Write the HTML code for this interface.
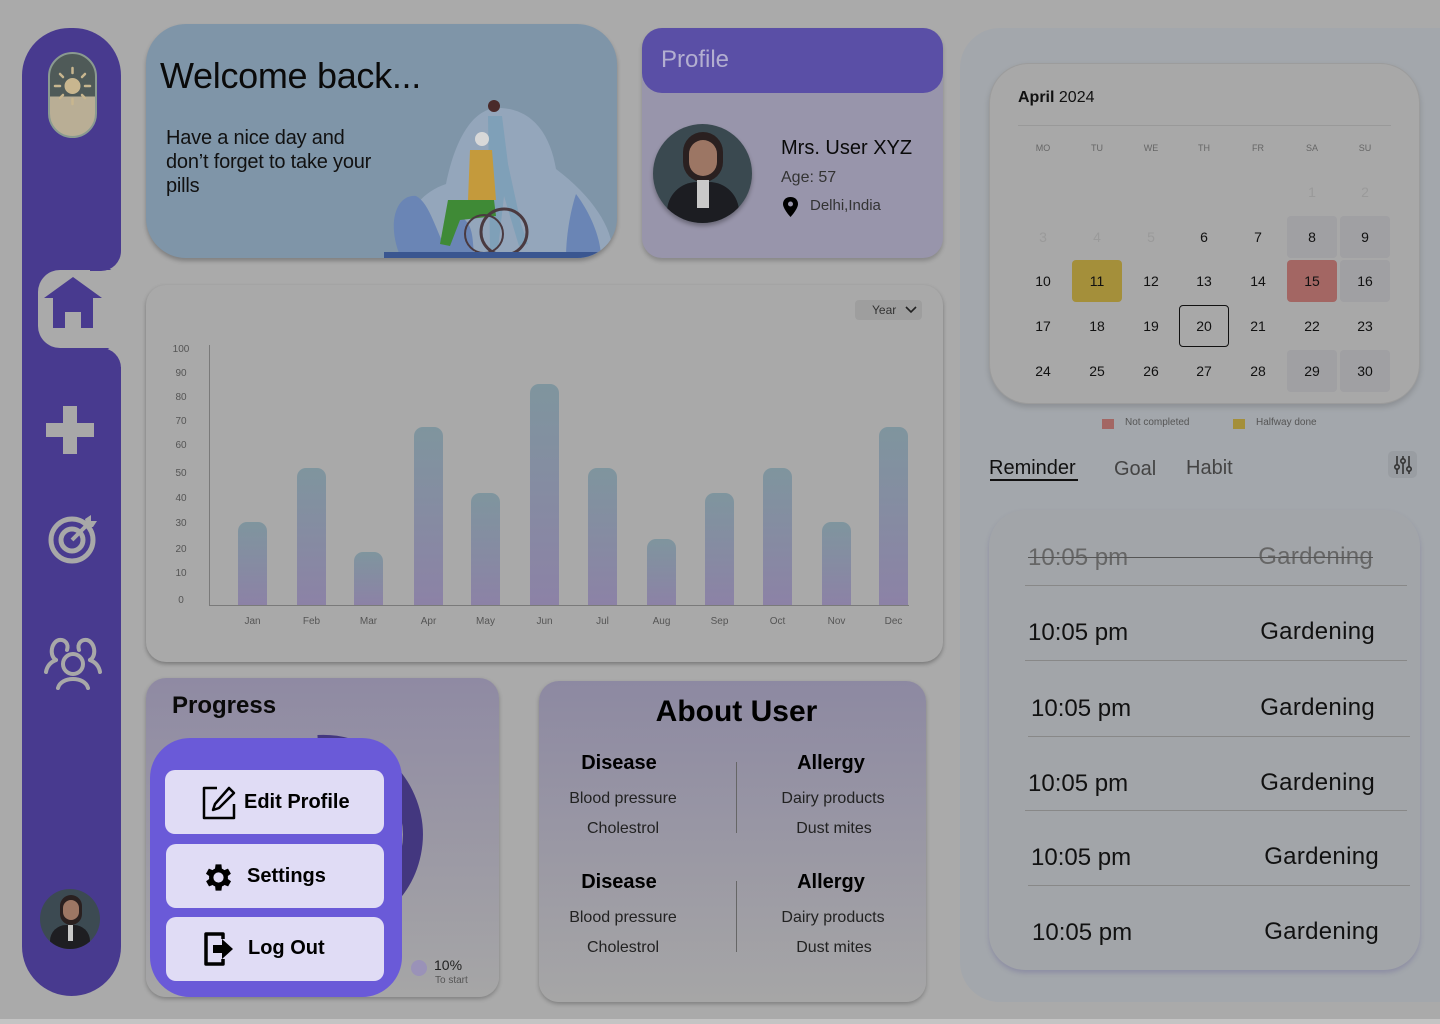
<!DOCTYPE html>
<html><head><meta charset="utf-8"><style>
*{margin:0;padding:0;box-sizing:border-box}
body{width:1440px;height:1024px;background:#aaaaaa;font-family:"Liberation Sans",sans-serif;position:relative;overflow:hidden;color:#111}
.a{position:absolute}
.t{position:absolute;white-space:nowrap;line-height:1}
</style></head><body>
<div class="a" style="left:0;top:1019px;width:1440px;height:5px;background:#c4c4c4"></div>
<!-- right panel -->
<div class="a" style="left:960px;top:28px;width:480px;height:974px;background:#a3a7ac;border-radius:40px 0 0 40px"></div>

<!-- sidebar -->
<div class="a" style="left:22px;top:28px;width:99px;height:968px;background:#483a8f;border-radius:48px 48px 50px 50px"></div>
<div class="a" style="left:38px;top:270px;width:90px;height:78px;background:#aaaaaa;border-radius:22px 0 0 22px"></div>
<div class="a" style="left:100px;top:250px;width:30px;height:22px;background:#aaaaaa;border-radius:0 0 0 20px"></div>
<div class="a" style="left:100px;top:345px;width:30px;height:22px;background:#aaaaaa;border-radius:20px 0 0 0"></div>
<div class="a" style="left:90px;top:245px;width:31px;height:26px;background:#483a8f;border-radius:0 0 20px 0"></div>
<div class="a" style="left:90px;top:348px;width:31px;height:26px;background:#483a8f;border-radius:0 20px 0 0"></div>
<!-- logo pill -->
<div class="a" style="left:48px;top:52px;width:49px;height:86px;border-radius:25px;background:linear-gradient(#4f5a58 0 52%,#b9ae95 52%);border:2px solid #8a9a90"></div>
<svg class="a" style="left:50px;top:64px" width="45" height="45" viewBox="0 0 45 45"><circle cx="22.5" cy="22" r="8" fill="#c8b68f"/><g stroke="#c8b68f" stroke-width="2.5" stroke-linecap="round"><line x1="22.5" y1="4" x2="22.5" y2="9"/><line x1="22.5" y1="35" x2="22.5" y2="40"/><line x1="5" y1="22" x2="10" y2="22"/><line x1="35" y1="22" x2="40" y2="22"/><line x1="10" y1="10" x2="13" y2="13"/><line x1="32" y1="31" x2="35" y2="34"/><line x1="35" y1="10" x2="32" y2="13"/><line x1="10" y1="34" x2="13" y2="31"/></g></svg>
<!-- home -->
<svg class="a" style="left:43px;top:276px" width="60" height="54" viewBox="0 0 60 54"><path d="M30 1 L59 22 L50 22 L50 52 L38 52 L38 36 L22 36 L22 52 L10 52 L10 22 L1 22 Z" fill="#483a8f"/></svg>
<!-- plus -->
<svg class="a" style="left:46px;top:406px" width="48" height="48"><path d="M17 0h14v17h17v14H31v17H17V31H0V17h17z" fill="#a8a8a8"/></svg>
<!-- target -->
<svg class="a" style="left:47px;top:513px" width="52" height="52" viewBox="0 0 52 52"><circle cx="25" cy="27" r="21" fill="none" stroke="#a8a8a8" stroke-width="5"/><circle cx="25" cy="27" r="11" fill="none" stroke="#a8a8a8" stroke-width="5"/><line x1="25" y1="27" x2="42" y2="10" stroke="#a8a8a8" stroke-width="4"/><path d="M38 6 L44 2 L44 8 L50 8 L46 14 L40 14Z" fill="#a8a8a8"/></svg>
<!-- users -->
<svg class="a" style="left:43px;top:634px" width="60" height="56" viewBox="0 0 60 56" fill="none" stroke="#a8a8a8" stroke-width="4" stroke-linecap="round"><circle cx="30" cy="30" r="10"/><path d="M15 54 C18 42 42 42 45 54"/><path d="M13 26 C6 22 8 8 16 6 C22 5 26 10 24 16"/><path d="M47 26 C54 22 52 8 44 6 C38 5 34 10 36 16"/><path d="M13 26 C8 28 4 32 3 38"/><path d="M47 26 C52 28 56 32 57 38"/></svg>
<!-- sidebar avatar -->
<div class="a" style="left:40px;top:889px;width:60px;height:60px;border-radius:50%;background:#3c4a52;overflow:hidden">
 <div class="a" style="left:20px;top:6px;width:22px;height:30px;border-radius:11px;background:#2a2020"></div>
 <div class="a" style="left:23px;top:11px;width:16px;height:20px;border-radius:8px;background:#9c7664"></div>
 <div class="a" style="left:10px;top:36px;width:40px;height:30px;background:#1e1e22;border-radius:16px 16px 0 0"></div>
 <div class="a" style="left:28px;top:36px;width:5px;height:16px;background:#c9c9c9"></div>
</div>

<!-- welcome card -->
<div class="a" style="left:146px;top:24px;width:471px;height:234px;background:#7f95a8;border-radius:40px;box-shadow:0 3px 4px rgba(0,0,0,.25);overflow:hidden">
 <svg class="a" style="left:230px;top:60px" width="241" height="174" viewBox="0 0 241 174">
  <path d="M40 174 C20 140 40 110 70 100 C80 50 100 22 125 24 C160 26 175 55 180 85 C220 115 240 150 236 174Z" fill="#94a6bb"/>
  <path d="M25 174 C10 140 20 110 40 112 C55 120 60 150 75 174Z" fill="#6a85b5"/>
  <path d="M70 174 C60 150 70 130 88 135 C100 145 95 165 100 174Z" fill="#6a85b5"/>
  <path d="M190 174 C190 150 195 125 200 110 C215 130 225 155 225 174Z" fill="#6a85b5"/>
  <circle cx="118" cy="22" r="6" fill="#4a2a2a"/>
  <path d="M112 32 L126 32 L132 80 L145 140 L152 160 L143 162 L128 112 L122 165 L114 165Z" fill="#7fa0b8"/>
  <circle cx="106" cy="55" r="7" fill="#d8d8d8"/>
  <path d="M94 66 L116 66 L120 116 L92 116Z" fill="#c49a3c"/>
  <path d="M72 116 L118 116 L120 132 L84 136 L74 162 L64 160Z" fill="#3f8a36"/>
  <circle cx="128" cy="148" r="23" fill="none" stroke="#4a3a40" stroke-width="3"/>
  <circle cx="108" cy="150" r="19" fill="none" stroke="#4a3a40" stroke-width="2"/>
 </svg>
 <div class="a" style="left:238px;top:228px;width:233px;height:6px;background:#3a5690"></div>
</div>
<div class="t" style="left:160px;top:58px;font-size:36px;color:#0a0a0a;letter-spacing:-0.3px">Welcome back...</div>
<div class="t" style="left:166px;top:126px;font-size:20px;line-height:24px;color:#111;letter-spacing:-0.2px">Have a nice day and<br>don’t forget to take your<br>pills</div>

<!-- profile card -->
<div class="a" style="left:642px;top:28px;width:301px;height:230px;background:#9895ab;border-radius:20px;box-shadow:0 3px 4px rgba(0,0,0,.2)"></div>
<div class="a" style="left:642px;top:28px;width:301px;height:65px;background:#5a4fa6;border-radius:20px"></div>
<div class="t" style="left:661px;top:48px;font-size:24px;color:#b3afd0">Profile</div>
<div class="a" style="left:653px;top:124px;width:99px;height:99px;border-radius:50%;background:#3a4950;overflow:hidden;box-shadow:0 3px 4px rgba(0,0,0,.3)">
 <div class="a" style="left:30px;top:8px;width:40px;height:50px;border-radius:20px;background:#2a2020"></div>
 <div class="a" style="left:36px;top:16px;width:28px;height:36px;border-radius:14px;background:#9c7664"></div>
 <div class="a" style="left:14px;top:58px;width:72px;height:45px;border-radius:30px 30px 0 0;background:#1c1d22"></div>
 <div class="a" style="left:44px;top:56px;width:12px;height:28px;background:#c9c9c9"></div>
</div>
<div class="t" style="left:781px;top:138px;font-size:20px;color:#0a0a0a">Mrs. User XYZ</div>
<div class="t" style="left:781px;top:170px;font-size:16px;color:#333">Age: 57</div>
<svg class="a" style="left:782px;top:197px" width="17" height="20" viewBox="0 0 17 20"><path d="M8.5 0C4 0 1 3 1 7c0 5 7.5 13 7.5 13S16 12 16 7c0-4-3-7-7.5-7z" fill="#000"/><circle cx="8.5" cy="7" r="2.5" fill="#9895ab"/></svg>
<div class="t" style="left:810px;top:198px;font-size:15px;color:#333">Delhi,India</div>

<!-- chart card -->
<div class="a" style="left:146px;top:285px;width:797px;height:377px;background:#a9a9a9;border-radius:20px;box-shadow:0 2px 4px rgba(0,0,0,.3)"></div>
<div class="a" style="left:855px;top:300px;width:67px;height:20px;background:#9e9e9e;border-radius:4px"></div>
<div class="t" style="left:872px;top:304px;font-size:12px;color:#333">Year</div>
<svg class="a" style="left:905px;top:305px" width="12" height="10"><path d="M1 2 L6 7 L11 2" fill="none" stroke="#222" stroke-width="1.6"/></svg>
<div class="a" style="left:209px;top:345px;width:1px;height:261px;background:#7a7a7a"></div>
<div class="a" style="left:209px;top:605px;width:700px;height:1px;background:#7a7a7a"></div>
<div id="yl"></div>

<!-- progress card -->
<div class="a" style="left:146px;top:678px;width:353px;height:319px;background:linear-gradient(#8f8aa3,#a6a6a6);border-radius:20px;box-shadow:0 2px 4px rgba(0,0,0,.25)"></div>
<div class="t" style="left:172px;top:694px;font-size:24px;font-weight:bold;color:#0a0a0a">Progress</div>
<svg class="a" style="left:200px;top:720px" width="260" height="240"><path d="M118 25 A90 90 0 0 1 185 180" fill="none" stroke="#43377f" stroke-width="20"/></svg>
<div class="a" style="left:411px;top:960px;width:16px;height:16px;border-radius:50%;background:#9a92b8"></div>
<div class="t" style="left:434px;top:958px;font-size:14px;color:#222">10%</div>
<div class="t" style="left:435px;top:976px;font-size:10px;color:#555">To start</div>

<!-- popup -->
<div class="a" style="left:150px;top:738px;width:252px;height:259px;background:#6a5ad8;border-radius:40px"></div>
<div class="a" style="left:165px;top:770px;width:219px;height:64px;background:#e0dcf5;border-radius:10px"></div>
<div class="a" style="left:166px;top:844px;width:218px;height:64px;background:#e0dcf5;border-radius:10px"></div>
<div class="a" style="left:166px;top:917px;width:218px;height:64px;background:#e0dcf5;border-radius:10px"></div>
<svg class="a" style="left:202px;top:786px" width="34" height="34" viewBox="0 0 34 34" fill="none" stroke="#000" stroke-width="2.5" stroke-linejoin="round"><path d="M15 2 H2 V32 H32 V18"/><path d="M27 2 L32 7 L17 22 L11 24 L13 18 Z"/></svg>
<div class="t" style="left:244px;top:792px;font-size:20px;font-weight:bold;color:#000">Edit Profile</div>
<svg class="a" style="left:201px;top:860px" width="35" height="35" viewBox="0 0 24 24"><path fill="#000" d="M19.4 13a7.5 7.5 0 0 0 0-2l2.1-1.6-2-3.5-2.5 1a7 7 0 0 0-1.7-1L15 3h-4l-.4 2.9a7 7 0 0 0-1.7 1l-2.5-1-2 3.5L6.6 11a7.5 7.5 0 0 0 0 2l-2.1 1.6 2 3.5 2.5-1a7 7 0 0 0 1.7 1L11 21h4l.4-2.9a7 7 0 0 0 1.7-1l2.5 1 2-3.5zM13 15.5a3.5 3.5 0 1 1 0-7 3.5 3.5 0 0 1 0 7z" transform="translate(-1 0)"/></svg>
<div class="t" style="left:247px;top:866px;font-size:20px;font-weight:bold;color:#000">Settings</div>
<svg class="a" style="left:203px;top:931px" width="32" height="36" viewBox="0 0 32 36"><path d="M20 8 V3 H3 V33 H20 V28" fill="none" stroke="#000" stroke-width="3.5" stroke-linejoin="round"/><path d="M10 14 H19 V8 L30 18 L19 28 V22 H10Z" fill="#000"/></svg>
<div class="t" style="left:248px;top:938px;font-size:20px;font-weight:bold;color:#000">Log Out</div>

<!-- about card -->
<div class="a" style="left:539px;top:681px;width:387px;height:321px;background:linear-gradient(#8d89a2,#a6a6a6);border-radius:20px;box-shadow:0 2px 4px rgba(0,0,0,.25)"></div>
<div class="t" style="left:539px;top:697px;width:395px;text-align:center;font-size:30px;font-weight:bold;color:#000">About User</div>
<div id="about"></div>

<!-- calendar -->
<div class="a" style="left:989px;top:63px;width:431px;height:341px;background:#a8a8a8;border-radius:40px;box-shadow:0 3px 6px rgba(0,0,0,.15);border:1px solid #9c9c9c"></div>
<div class="t" style="left:1018px;top:90px;font-size:16px;color:#111"><b>April</b> 2024</div>
<div class="a" style="left:1018px;top:125px;width:373px;height:1px;background:#999"></div>
<div id="cal"></div>
<div class="a" style="left:1102px;top:419px;width:12px;height:10px;background:#a36663"></div>
<div class="t" style="left:1125px;top:418px;font-size:10px;color:#555">Not completed</div>
<div class="a" style="left:1233px;top:419px;width:12px;height:10px;background:#a48f3a"></div>
<div class="t" style="left:1256px;top:418px;font-size:10px;color:#555">Halfway done</div>

<div class="t" style="left:989px;top:458px;font-size:20px;color:#111">Reminder</div>
<div class="a" style="left:990px;top:479px;width:88px;height:2px;background:#111"></div>
<div class="t" style="left:1114px;top:459px;font-size:20px;color:#444">Goal</div>
<div class="t" style="left:1186px;top:458px;font-size:20px;color:#444">Habit</div>
<div class="a" style="left:1388px;top:451px;width:29px;height:27px;background:#999da2;border-radius:5px"></div>
<svg class="a" style="left:1393px;top:454px" width="20" height="22" viewBox="0 0 20 22" fill="none" stroke="#333" stroke-width="1.6"><line x1="4" y1="2" x2="4" y2="20"/><line x1="10" y1="2" x2="10" y2="20"/><line x1="16" y1="2" x2="16" y2="20"/><circle cx="4" cy="13" r="2.2" fill="#999da2"/><circle cx="10" cy="7" r="2.2" fill="#999da2"/><circle cx="16" cy="15" r="2.2" fill="#999da2"/></svg>

<!-- reminders -->
<div class="a" style="left:989px;top:510px;width:431px;height:460px;background:#a2a5a9;border-radius:36px;box-shadow:0 3px 5px rgba(80,70,140,.25)"></div>
<div id="rem"></div>

<script>
var h='';
var yl=[[100,349],[90,373],[80,397],[70,421],[60,445],[50,473],[40,498],[30,523],[20,549],[10,573],[0,600]];
yl.forEach(function(a){h+='<div class="t" style="left:166px;width:30px;text-align:center;top:'+(a[1]-4)+'px;font-size:10px;color:#555">'+a[0]+'</div>';});
var m=['Jan','Feb','Mar','Apr','May','Jun','Jul','Aug','Sep','Oct','Nov','Dec'];
var x=[238,297,354,414,471,530,588,647,705,763,822,879];
var tp=[522,468,552,427,493,384,468,539,493,468,522,427];
for(var i=0;i<12;i++){h+='<div class="a" style="left:'+x[i]+'px;top:'+tp[i]+'px;width:29px;height:'+(605-tp[i])+'px;border-radius:9px 9px 0 0;background:linear-gradient(#7f959e,#8c82a6)"></div>';
h+='<div class="t" style="left:'+(x[i]-10)+'px;width:49px;text-align:center;top:617px;font-size:10px;color:#555">'+m[i]+'</div>';}
document.getElementById('yl').outerHTML=h;
h='';
[[763,798,828],[882,917,947]].forEach(function(r){
h+='<div class="t" style="left:519px;width:200px;text-align:center;top:'+(r[0]-10)+'px;font-size:20px;font-weight:bold;color:#000">Disease</div>';
h+='<div class="t" style="left:731px;width:200px;text-align:center;top:'+(r[0]-10)+'px;font-size:20px;font-weight:bold;color:#000">Allergy</div>';
h+='<div class="t" style="left:523px;width:200px;text-align:center;top:'+(r[1]-7)+'px;font-size:16px;color:#222">Blood pressure</div>';
h+='<div class="t" style="left:523px;width:200px;text-align:center;top:'+(r[2]-7)+'px;font-size:16px;color:#222">Cholestrol</div>';
h+='<div class="t" style="left:733px;width:200px;text-align:center;top:'+(r[1]-7)+'px;font-size:16px;color:#222">Dairy products</div>';
h+='<div class="t" style="left:734px;width:200px;text-align:center;top:'+(r[2]-7)+'px;font-size:16px;color:#222">Dust mites</div>';
h+='<div class="a" style="left:736px;top:'+(r[0]-1)+'px;width:1px;height:71px;background:#666"></div>';
});
document.getElementById('about').outerHTML=h;
h='';
var cx=[1043,1097,1151,1204,1258,1312,1365],ry=[192,237,281,326,371];
['MO','TU','WE','TH','FR','SA','SU'].forEach(function(d,i){h+='<div class="t" style="left:'+(cx[i]-20)+'px;width:40px;text-align:center;top:144px;font-size:9px;color:#666">'+d+'</div>';});
var bg={8:'#a0a0a3',9:'#a0a0a3',16:'#a0a0a3',29:'#a0a0a3',30:'#a0a0a3',11:'#a48f3a',15:'#a36663'};
for(var d=1;d<=30;d++){var idx=d+4,r=Math.floor(idx/7),c=idx%7;var col=d<6?'#9a9a9a':'#111';
var st='';if(bg[d])st='background:'+bg[d]+';';if(d==20)st='border:1.5px solid #111;';
h+='<div class="a" style="left:'+(cx[c]-25)+'px;top:'+(ry[r]-21)+'px;width:50px;height:42px;border-radius:4px;'+st+'"></div>';
h+='<div class="t" style="left:'+(cx[c]-25)+'px;width:50px;text-align:center;top:'+(ry[r]-7)+'px;font-size:14px;color:'+col+'">'+d+'</div>';}
document.getElementById('cal').outerHTML=h;
h='';
var rows=[[557,1028,1373],[632,1028,1375],[708,1031,1375],[783,1028,1375],[857,1031,1379],[932,1032,1379]];
var lines=[[585,1025,1407],[660,1025,1407],[736,1028,1410],[810,1025,1407],[885,1028,1410]];
rows.forEach(function(r,i){var c=i==0?'#666':'#111';
h+='<div class="t" style="left:'+r[1]+'px;top:'+(r[0]-11)+'px;font-size:24px;color:'+c+'">10:05 pm</div>';
h+='<div class="t" style="left:'+(r[2]-200)+'px;width:200px;text-align:right;top:'+(r[0]-12)+'px;font-size:24px;color:'+c+';letter-spacing:0.3px">Gardening</div>';});
h+='<div class="a" style="left:1028px;top:557px;width:345px;height:1px;background:#555"></div>';
lines.forEach(function(l){h+='<div class="a" style="left:'+l[1]+'px;top:'+l[0]+'px;width:'+(l[2]-l[1])+'px;height:1px;background:#888"></div>';});
document.getElementById('rem').outerHTML=h;
</script>
</body></html>
